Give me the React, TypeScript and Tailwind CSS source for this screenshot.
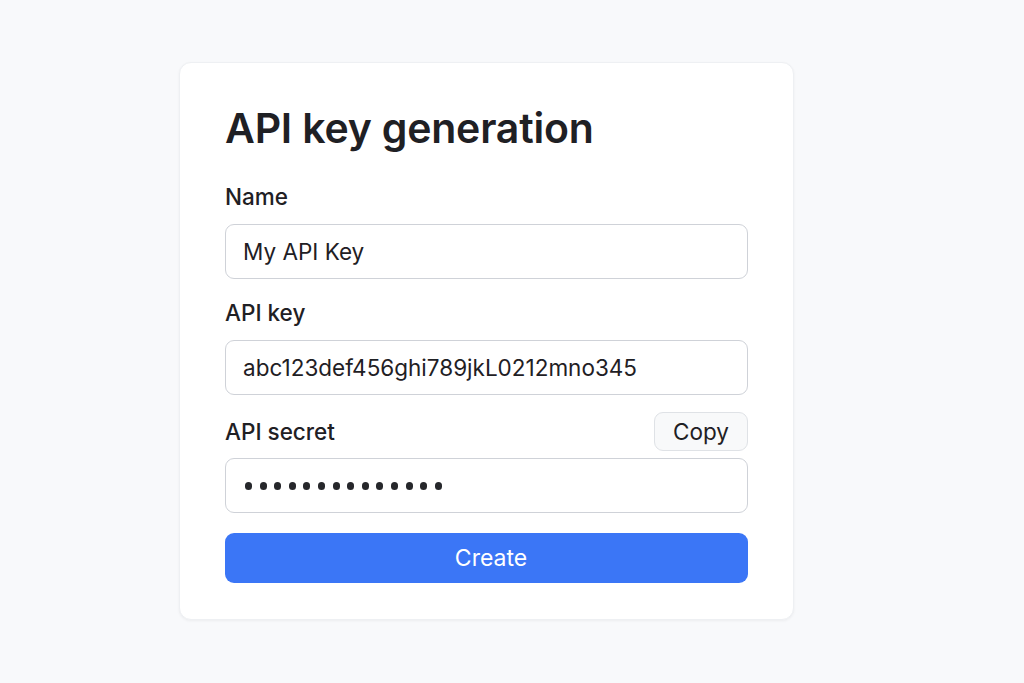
import React from 'react';

const Field = ({ label, value }: { label: string; value: string }) => (
  <div>
    <label className="block text-[22.5px] leading-[28px] font-medium text-[#1f2024] mb-[13px]">{label}</label>
    <div className="h-[55px] rounded-[9px] border border-[#cfd2d8] bg-white flex items-center px-[17px] text-[22.5px] text-[#1f2024]">
      {value}
    </div>
  </div>
);

const App = () => {
  return (
    <div
      className="min-h-[683px] bg-[#f8f9fb] pl-[179px] pt-[62px]"
      style={{ fontFamily: 'Inter, "Noto Sans", sans-serif' }}
    >
      <div className="w-[615px] bg-white rounded-[12px] border border-[#eef0f3] shadow-[0_1px_3px_rgba(0,0,0,0.05)] px-[45px] pt-[41px] pb-[36px]">
        <h1 className="text-[41px] leading-[48px] font-semibold text-[#1f2024] tracking-[-0.2px]">API key generation</h1>

        <div className="mt-[31px] flex flex-col gap-[20px]">
          <Field label="Name" value="My API Key" />
          <Field label="API key" value="abc123def456ghi789jkL0212mno345" />
        </div>

        <div className="mt-[17px]">
          <div className="flex items-center justify-between mb-[7px]">
            <span className="text-[22.5px] leading-[28px] font-medium text-[#1f2024]">API secret</span>
            <button className="h-[39px] w-[94px] rounded-[9px] border border-[#dfe2e6] bg-[#f8f9fa] text-[22.5px] text-[#1f2024]">
              Copy
            </button>
          </div>
          <div className="h-[55px] rounded-[9px] border border-[#cfd2d8] bg-white flex items-center pl-[19px] gap-[7.6px]">
            {Array.from({ length: 14 }).map((_, i) => (
              <span key={i} className="w-[7px] h-[8px] rounded-full bg-[#26272b]" />
            ))}
          </div>
        </div>

        <button className="mt-[20px] w-full h-[50px] rounded-[9px] bg-[#3b76f6] text-white text-[23px] pl-[9px]">
          Create
        </button>
      </div>
    </div>
  );
};

export default App;
